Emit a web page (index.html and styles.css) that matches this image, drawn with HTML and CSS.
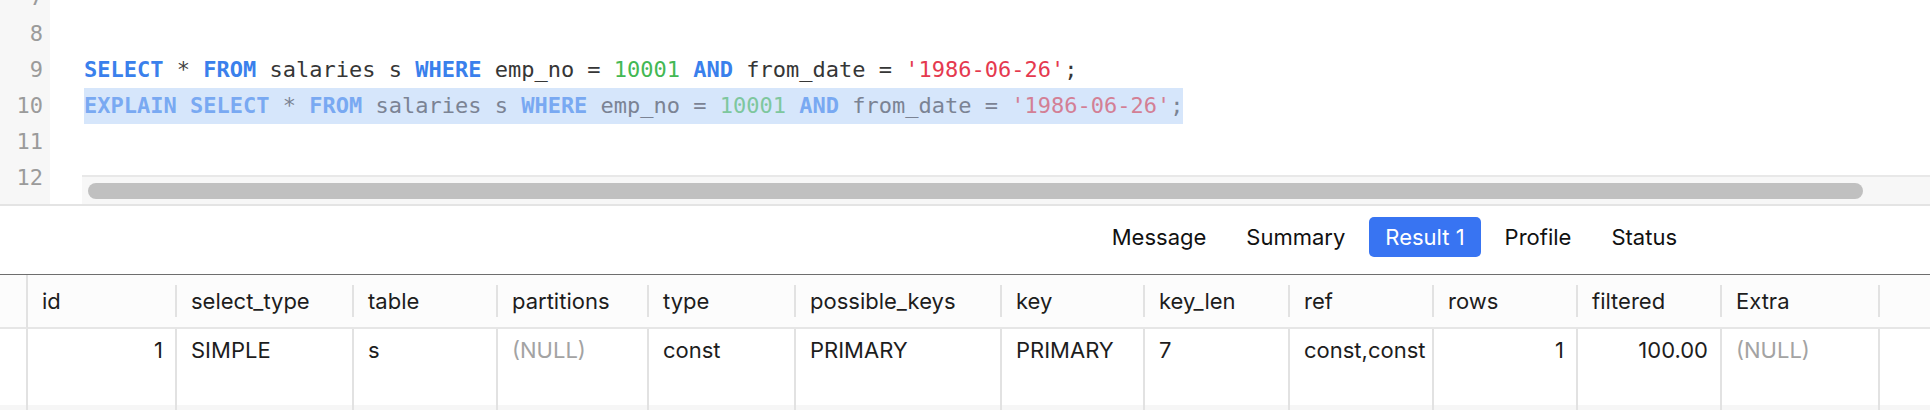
FILE: index.html
```html
<!DOCTYPE html>
<html>
<head>
<meta charset="utf-8">
<link rel="stylesheet" href="styles.css">
</head>
<body>
<div class="editor">
  <div class="gutter">
    <div class="ln">7</div>
    <div class="ln">8</div>
    <div class="ln">9</div>
    <div class="ln">10</div>
    <div class="ln">11</div>
    <div class="ln">12</div>
  </div>
  <div class="code">
    <div class="line"></div>
    <div class="line"></div>
    <div class="line"><span class="kw">SELECT</span> <span class="op">*</span> <span class="kw">FROM</span> salaries s <span class="kw">WHERE</span> emp_no = <span class="num">10001</span> <span class="kw">AND</span> from_date = <span class="str">'1986-06-26'</span>;</div>
    <div class="line"><span class="sel"><span class="kw">EXPLAIN</span> <span class="kw">SELECT</span> * <span class="kw">FROM</span> salaries s <span class="kw">WHERE</span> emp_no = <span class="num">10001</span> <span class="kw">AND</span> from_date = <span class="str">'1986-06-26'</span>;</span></div>
    <div class="line"></div>
    <div class="line"></div>
  </div>
  <div class="hscroll"><div class="thumb"></div></div>
</div>
<div class="tabs">
  <div class="tab">Message</div>
  <div class="tab">Summary</div>
  <div class="tab active">Result 1</div>
  <div class="tab">Profile</div>
  <div class="tab">Status</div>
</div>
<div class="grid">
  <div class="hcell ind"></div>
  <div class="hcell"><div class="hin">id</div></div>
  <div class="hcell"><div class="hin">select_type</div></div>
  <div class="hcell"><div class="hin">table</div></div>
  <div class="hcell"><div class="hin">partitions</div></div>
  <div class="hcell"><div class="hin">type</div></div>
  <div class="hcell"><div class="hin">possible_keys</div></div>
  <div class="hcell"><div class="hin">key</div></div>
  <div class="hcell"><div class="hin">key_len</div></div>
  <div class="hcell"><div class="hin">ref</div></div>
  <div class="hcell"><div class="hin">rows</div></div>
  <div class="hcell"><div class="hin">filtered</div></div>
  <div class="hcell"><div class="hin">Extra</div></div>
  <div class="hcell last"><div class="hin"></div></div>

  <div class="cell ind"></div>
  <div class="cell right">1</div>
  <div class="cell">SIMPLE</div>
  <div class="cell">s</div>
  <div class="cell null">(NULL)</div>
  <div class="cell">const</div>
  <div class="cell">PRIMARY</div>
  <div class="cell">PRIMARY</div>
  <div class="cell">7</div>
  <div class="cell">const,const</div>
  <div class="cell right">1</div>
  <div class="cell right">100.00</div>
  <div class="cell null">(NULL)</div>
  <div class="cell last"></div>

  <div class="cell ind alt"></div>
  <div class="cell alt"></div>
  <div class="cell alt"></div>
  <div class="cell alt"></div>
  <div class="cell alt"></div>
  <div class="cell alt"></div>
  <div class="cell alt"></div>
  <div class="cell alt"></div>
  <div class="cell alt"></div>
  <div class="cell alt"></div>
  <div class="cell alt"></div>
  <div class="cell alt"></div>
  <div class="cell alt"></div>
  <div class="cell alt last"></div>
</div>
</body>
</html>
```
FILE: styles.css
```css
* { box-sizing: border-box; }
html, body { margin: 0; padding: 0; background: #fff; }
body { width: 1930px; height: 410px; overflow: hidden; font-family: "Inter", "Liberation Sans", sans-serif; color: #1d1d1d; }

.editor {
  position: relative;
  display: flex;
  height: 206px;
  border-bottom: 2px solid #e4e4e4;
  overflow: hidden;
}
.gutter {
  width: 50px;
  flex: none;
  background: #f7f7f7;
  padding-right: 7px;
  margin-top: -20px;
}
.ln {
  height: 36px;
  line-height: 36px;
  text-align: right;
  font-family: "DejaVu Sans Mono", monospace;
  font-size: 22px;
  color: #9b9b9b;
}
.code {
  flex: 1;
  margin-top: -20px;
  padding-left: 34px;
  font-family: "DejaVu Sans Mono", monospace;
  font-size: 22px;
  color: #363636;
}
.line { height: 36px; line-height: 36px; white-space: pre; }
.kw { color: #3a80ec; font-weight: bold; }
.op { color: #444; }
.num { color: #43b853; }
.str { color: #e5394f; }
.sel { display: inline-block; background: #d6e6fb; color: #7b8394; }
.sel .kw { color: #79a9f2; }
.sel .num { color: #7ec79e; }
.sel .str { color: #d37f95; }

.hscroll {
  position: absolute;
  left: 82px;
  right: 0;
  bottom: 0;
  height: 29px;
  background: #f7f7f7;
  border-top: 2px solid #e8e8e8;
  padding: 6px 0 0 6px;
}
.thumb {
  width: 1775px;
  height: 16px;
  border-radius: 8px;
  background: #c0c0c0;
}

.tabs {
  display: flex;
  justify-content: flex-end;
  align-items: flex-start;
  gap: 8px;
  height: 69px;
  padding: 11px 237px 0 0;
  border-bottom: 1px solid #6e6e6e;
}
.tab {
  height: 40px;
  line-height: 40px;
  padding: 0 16px;
  font-size: 22px;
  color: #111;
  border-radius: 5px;
}
.tab.active { background: #3874f2; color: #fff; }

.grid {
  display: grid;
  grid-template-columns: 28px 149px 177px 144px 151px 147px 206px 143px 145px 144px 144px 144px 158px 1fr;
  font-size: 22px;
}
.hcell {
  height: 54px;
  background: #fcfcfc;
  border-bottom: 2px solid #e6e6e6;
  padding: 10px 0;
}
.hcell.ind { border-right: 2px solid #e2e2e2; padding: 0; }
.hin {
  height: 32px;
  line-height: 32px;
  border-right: 2px solid #e2e2e2;
  padding-left: 14px;
  color: #1d1d1d;
}
.cell {
  height: 76px;
  border-right: 2px solid #e2e2e2;
  padding: 8px 12px 0 14px;
  line-height: 26px;
  color: #1d1d1d;
  white-space: nowrap;
  overflow: hidden;
}
.cell.right { text-align: right; }
.cell.null { color: #a3a3a3; }
.cell.alt { background: #f6f6f6; }
.last { border-right: none; }
.hcell.last .hin { border-right: none; }
```
